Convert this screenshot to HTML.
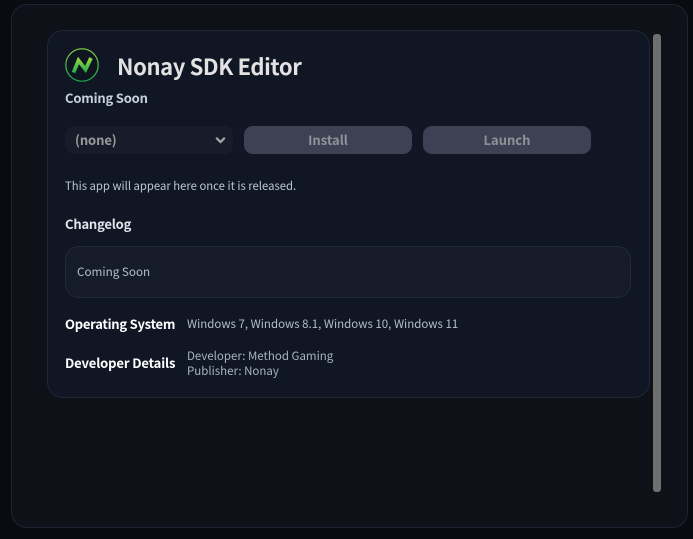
<!DOCTYPE html>
<html>
<head>
<meta charset="utf-8">
<style>
html,body{margin:0;padding:0;width:693px;height:539px;overflow:hidden;background:#0a0b10;}
body{font-family:"Noto Sans CJK JP","Liberation Sans",sans-serif;position:relative;}
div{box-sizing:border-box;}
.a{position:absolute;white-space:nowrap;line-height:16px;}
.b{font-weight:700;}
</style>
</head>
<body>
<div class="a" style="left:11px;top:4px;width:677px;height:524px;background:#0e1118;border:1px solid #1e2436;border-radius:16px;"></div>
<div class="a" style="left:47px;top:30px;width:603px;height:368px;background:#101624;border:1px solid #1e2638;border-radius:16px;"></div>
<div class="a" style="left:653px;top:34px;width:8px;height:458px;background:#6f6f6f;border-radius:3px;"></div>

<svg class="a" style="left:65px;top:48px;" width="34" height="34" viewBox="0 0 34 34">
<defs>
<linearGradient id="g" gradientUnits="userSpaceOnUse" x1="0" y1="0" x2="0" y2="34"><stop offset="0" stop-color="#8ed63e"/><stop offset="1" stop-color="#16a34a"/></linearGradient>
<linearGradient id="h" gradientUnits="userSpaceOnUse" x1="0" y1="9" x2="0" y2="26"><stop offset="0" stop-color="#a0dc3c"/><stop offset="1" stop-color="#18a850"/></linearGradient>
</defs>
<circle cx="17" cy="17" r="16.2" fill="#0e1420" stroke="url(#g)" stroke-width="1.2"/>
<path d="M8.5 24.5 L13.5 12.5 L20.5 21.5 L26 10" fill="none" stroke="url(#h)" stroke-width="3.8" stroke-linejoin="miter"/>
</svg>

<div class="a b" style="left:117px;top:52px;font-size:22px;letter-spacing:-0.4px;line-height:28px;color:#e2e2e2;">Nonay SDK Editor</div>
<div class="a b" style="left:65px;top:90px;font-size:13px;letter-spacing:-0.2px;color:#c6d0de;">Coming Soon</div>

<div class="a" style="left:65px;top:126px;width:168px;height:28px;background:#171c2a;border-radius:9px;"></div>
<div class="a b" style="left:75px;top:132px;font-size:13px;letter-spacing:-0.1px;color:#9a9a9a;">(none)</div>
<svg class="a" style="left:215px;top:136px;" width="11" height="8" viewBox="0 0 11 8"><path d="M1.2 1.8 L5.5 6 L9.8 1.8" fill="none" stroke="#a8a8a8" stroke-width="2.2"/></svg>

<div class="a" style="left:244px;top:126px;width:168px;height:28px;background:#3c4254;border-radius:9px;"></div>
<div class="a b" style="left:244px;top:132px;width:168px;text-align:center;font-size:13px;color:#8f9296;">Install</div>
<div class="a" style="left:423px;top:126px;width:168px;height:28px;background:#3c4254;border-radius:9px;"></div>
<div class="a b" style="left:423px;top:132px;width:168px;text-align:center;font-size:13px;color:#8f9296;">Launch</div>

<div class="a" style="left:65px;top:178px;font-size:11.3px;color:#bcc6d4;">This app will appear here once it is released.</div>
<div class="a b" style="left:65px;top:216px;font-size:13px;letter-spacing:-0.2px;color:#dfe3ea;">Changelog</div>

<div class="a" style="left:65px;top:246px;width:566px;height:52px;background:#161b29;border:1px solid #232a3c;border-radius:14px;"></div>
<div class="a" style="left:77px;top:264px;font-size:11.7px;color:#b4bdca;">Coming Soon</div>

<div class="a b" style="left:65px;top:316px;font-size:13px;letter-spacing:-0.25px;color:#ffffff;">Operating System</div>
<div class="a" style="left:187px;top:316px;font-size:11.5px;color:#b4bdca;">Windows 7, Windows 8.1, Windows 10, Windows 11</div>
<div class="a b" style="left:65px;top:355px;font-size:13px;letter-spacing:-0.13px;color:#ffffff;">Developer Details</div>
<div class="a" style="left:187px;top:348px;font-size:11.5px;color:#a8b2c0;">Developer: Method Gaming</div>
<div class="a" style="left:187px;top:363px;font-size:11.5px;color:#a8b2c0;">Publisher: Nonay</div>
</body>
</html>
